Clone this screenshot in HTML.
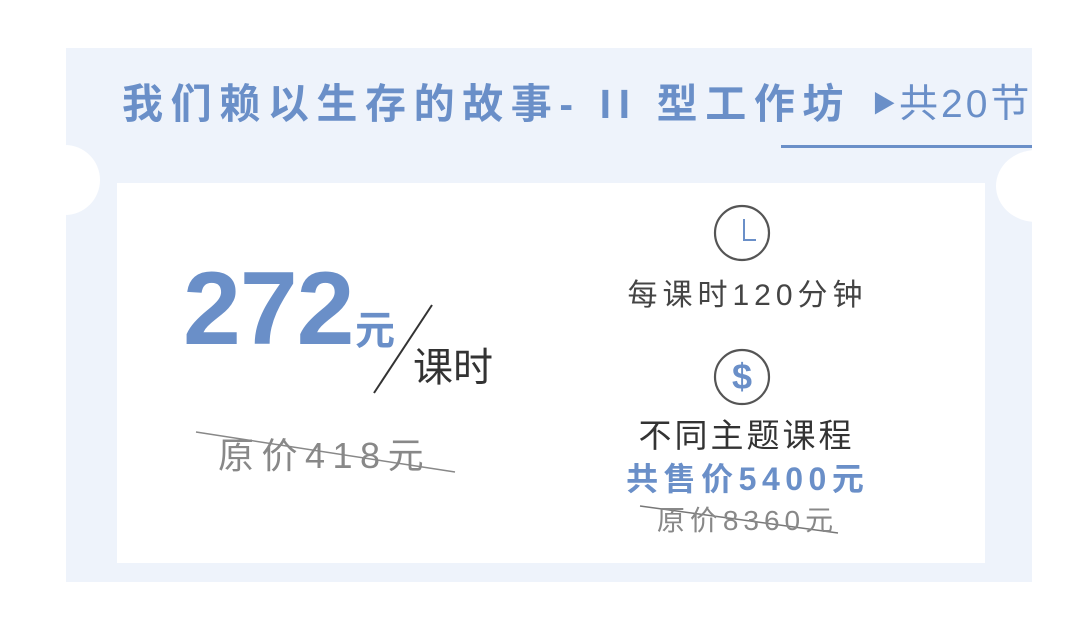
<!DOCTYPE html>
<html><head><meta charset="utf-8"><style>
body{margin:0;width:1080px;height:625px;background:#fff;position:relative;overflow:hidden;font-family:"Liberation Sans","Noto Sans CJK SC",sans-serif}
.a{position:absolute;white-space:nowrap}
</style></head><body>
<div class="a" style="left:66px;top:48px;width:966px;height:534px;background:#eef3fb"></div>
<div class="a" style="left:30px;top:145px;width:70px;height:70px;border-radius:50%;background:#fff"></div>
<div class="a" style="left:996px;top:150px;width:80px;height:72px;border-radius:50%;background:#fff"></div>
<div class="a" style="left:117px;top:183px;width:868px;height:380px;background:#fff"></div>
<div class="a" style="left:122px;top:76px;font-size:41px;font-weight:bold;color:#6a8fc8;letter-spacing:7.6px;line-height:56px">我们赖以生存的故事- II 型工作坊</div>
<div class="a" style="left:872px;top:81px;font-size:39px;color:#6a8fc8;line-height:48px;letter-spacing:3px"><span style="font-size:24px;vertical-align:5px">▶</span>共20节</div>
<div class="a" style="left:781px;top:145px;width:251px;height:3px;background:#6a8fc8"></div>
<div class="a" style="left:183px;top:257px;font-size:104px;font-weight:bold;color:#6a8fc8;line-height:104px;letter-spacing:-1px">272</div>
<div class="a" style="left:355px;top:308px;font-size:40px;font-weight:bold;color:#6a8fc8;line-height:46px">元</div>
<svg class="a" style="left:0;top:0" width="1080" height="625">
<line x1="432" y1="305" x2="374" y2="393" stroke="#333" stroke-width="2"/>
<line x1="196" y1="432" x2="455" y2="472" stroke="#888" stroke-width="1.5"/>
<line x1="640" y1="506" x2="838" y2="533" stroke="#777" stroke-width="1.5"/>
<circle cx="742" cy="233" r="27" fill="none" stroke="#555" stroke-width="2.2"/>
<path d="M744 219V240H756" fill="none" stroke="#6a8fc8" stroke-width="2"/>
<circle cx="742" cy="377" r="27" fill="none" stroke="#555" stroke-width="2.2"/>
</svg>
<div class="a" style="left:712px;top:357px;width:60px;text-align:center;font-size:36px;font-weight:bold;color:#6a8fc8;line-height:40px">$</div>
<div class="a" style="left:413px;top:345px;font-size:40px;color:#333;line-height:46px">课时</div>
<div class="a" style="left:218px;top:434px;font-size:36px;color:#888;line-height:44px;letter-spacing:7.5px">原价418元</div>
<div class="a" style="left:600px;top:276px;width:290px;text-align:center;font-size:30px;color:#444;line-height:40px;letter-spacing:5px;text-indent:5px">每课时120分钟</div>
<div class="a" style="left:600px;top:415px;width:290px;text-align:center;font-size:33px;color:#333;line-height:42px;letter-spacing:3px;text-indent:3px">不同主题课程</div>
<div class="a" style="left:600px;top:458px;width:290px;text-align:center;font-size:32px;font-weight:bold;color:#6a8fc8;line-height:42px;letter-spacing:5.5px;text-indent:5.5px">共售价5400元</div>
<div class="a" style="left:600px;top:502px;width:290px;text-align:center;font-size:28px;color:#888;line-height:38px;letter-spacing:5px;text-indent:5px">原价8360元</div>
</body></html>
